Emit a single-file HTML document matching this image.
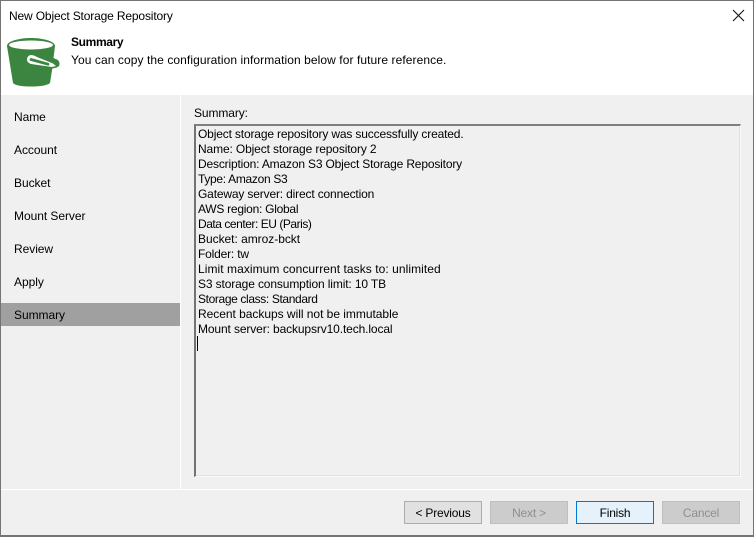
<!DOCTYPE html>
<html><head><meta charset="utf-8">
<style>
html,body{margin:0;padding:0;background:#f0f0f0}
#w{position:relative;width:754px;height:537px;overflow:hidden;background:#f0f0f0;font:12px/15px "Liberation Sans",sans-serif;color:#000}
#w div{position:absolute;box-sizing:border-box}
.t{white-space:nowrap}
.t span{display:block}
.n{left:14px;height:15px;letter-spacing:-.05px}
.b{top:501px;width:78px;height:23px;border:1px solid #adadad;text-align:center;line-height:22px;background:#e1e1e1;letter-spacing:-.2px}
.d{background:#cccccc;border-color:#bfbfbf;color:#8f8f8f}
</style></head><body>
<div id="w">
<div style="left:0;top:0;width:754px;height:95px;background:#fff"></div>
<div class="t" style="left:9px;top:9px;letter-spacing:-.15px">New Object Storage Repository</div>
<svg style="position:absolute;left:0;top:30px" width="70" height="60" viewBox="0 30 70 60">
<path d="M7 46C7 41 20 38 31 38C42 38 55 41 55 46L53.500 58L58 60Q60.500 63 59 66Q57 68 52.300 68.500L50 83Q46 86.500 31 86.500Q16 86.500 13 83Z" fill="#3b8540"/>
<ellipse cx="31" cy="45" rx="22" ry="4.500" fill="#fff"/>
<path d="M31.500 55Q35 55.500 37 57L53 63.500L56 66L52 67L31 64Q26.500 62.500 27 58.500Q28 55 31.500 55Z" fill="#fff"/>
<path d="M31 59.500L48 64.200" fill="none" stroke="#3b8540" stroke-width="2.800" stroke-linecap="round"/>
</svg>
<div class="t" style="left:71px;top:35px;font-weight:bold;letter-spacing:-.35px">Summary</div>
<div class="t" style="left:71px;top:53px;letter-spacing:.08px">You can copy the configuration information below for future reference.</div>
<svg style="position:absolute;left:732px;top:9px" width="13" height="13" viewBox="0 0 13 13"><path d="M1 1L12 12M12 1L1 12" stroke="#111" stroke-width="1.100" fill="none"/></svg>

<div style="left:180px;top:95px;width:1px;height:395px;background:#fff"></div>
<div style="left:0;top:489px;width:754px;height:1px;background:#fff"></div>
<div class="t n" style="top:110px">Name</div>
<div class="t n" style="top:143px">Account</div>
<div class="t n" style="top:176px">Bucket</div>
<div class="t n" style="top:209px">Mount Server</div>
<div class="t n" style="top:242px">Review</div>
<div class="t n" style="top:275px">Apply</div>
<div style="left:1px;top:303px;width:179px;height:23px;background:#a0a0a0"></div>
<div class="t n" style="top:308px">Summary</div>

<div class="t" style="left:194px;top:106px;letter-spacing:-.1px">Summary:</div>
<div style="left:194px;top:124px;width:547px;height:353px;border-top:2px solid #808080;border-left:2px solid #737373;border-right:1px solid #fafafa;border-bottom:1px solid #fafafa;box-shadow:inset 0 -1px 0 #e0e0e0,inset -1px 0 0 #e0e0e0"></div>
<div class="t" style="left:198px;top:127px">
<span style="letter-spacing:-.156px">Object storage repository was successfully created.</span>
<span style="letter-spacing:-.13px">Name: Object storage repository 2</span>
<span style="letter-spacing:-.17px">Description: Amazon S3 Object Storage Repository</span>
<span style="letter-spacing:-.31px">Type: Amazon S3</span>
<span style="letter-spacing:-.16px">Gateway server: direct connection</span>
<span style="letter-spacing:-.26px">AWS region: Global</span>
<span style="letter-spacing:-.46px">Data center: EU (Paris)</span>
<span style="letter-spacing:-.035px">Bucket: amroz-bckt</span>
<span style="letter-spacing:-.18px">Folder: tw</span>
<span style="letter-spacing:.06px">Limit maximum concurrent tasks to: unlimited</span>
<span style="letter-spacing:-.13px">S3 storage consumption limit: 10 TB</span>
<span style="letter-spacing:-.37px">Storage class: Standard</span>
<span style="letter-spacing:-.03px">Recent backups will not be immutable</span>
<span style="letter-spacing:-.12px">Mount server: backupsrv10.tech.local</span>
</div>
<div style="left:197px;top:336px;width:1px;height:15px;background:#000"></div>

<div class="b" style="left:404px">&lt; Previous</div>
<div class="b d" style="left:490px">Next &gt;</div>
<div class="b" style="left:576px;background:#e5f1fb;border-color:#0078d7">Finish</div>
<div class="b d" style="left:662px">Cancel</div>

<div style="left:0;top:0;width:754px;height:537px;border:1px solid #747474;border-width:1px 1px 2px 1px"></div>
</div>
</body></html>
